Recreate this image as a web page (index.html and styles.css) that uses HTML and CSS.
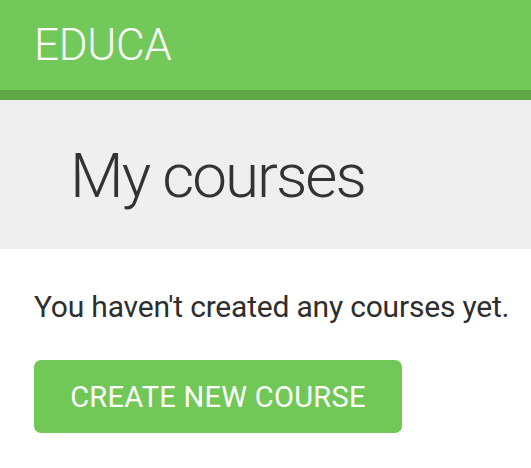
FILE: index.html
```html
<!DOCTYPE html>
<html>
<head>
<meta charset="utf-8">
<link rel="stylesheet" href="styles.css">
</head>
<body>
<header class="header"><span class="logo">EDUCA</span></header>
<div class="title-bar"><h1 class="title">My courses</h1></div>
<main class="content">
  <p class="empty">You haven't created any courses yet.</p>
  <a class="button" href="#">CREATE NEW COURSE</a>
</main>
</body>
</html>
```
FILE: styles.css
```css
html, body {
  margin: 0;
  padding: 0;
  background: #fff;
  font-family: Roboto, "Liberation Sans", sans-serif;
}
.header {
  background: #72c95a;
  border-bottom: 10px solid #5fa847;
  height: 90px;
  box-sizing: content-box;
  display: flex;
  align-items: center;
  padding-left: 34px;
}
.logo {
  color: #fff;
  font-weight: 300;
  font-size: 44px;
  letter-spacing: -0.3px;
  line-height: 1;
}
.title-bar {
  background: #efefef;
  height: 149px;
  box-sizing: border-box;
  padding: 45px 0 0 70px;
}
.title {
  margin: 0;
  font-weight: 300;
  font-size: 62px;
  letter-spacing: -2px;
  color: #333;
  line-height: 1;
}
.content {
  padding: 40px 34px 20px;
}
.empty {
  margin: 0 0 35px;
  font-size: 30px;
  letter-spacing: -0.2px;
  color: #2e2e2e;
  line-height: 36px;
  white-space: nowrap;
}
.button {
  display: inline-flex;
  align-items: center;
  justify-content: center;
  width: 368px;
  height: 73px;
  background: #71c857;
  color: #fff;
  font-size: 29px;
  letter-spacing: 0.3px;
  text-decoration: none;
  border-radius: 7px;
}
```
